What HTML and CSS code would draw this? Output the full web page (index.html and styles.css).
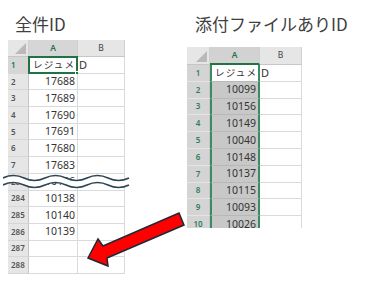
FILE: index.html
```html
<!DOCTYPE html>
<html>
<head>
<meta charset="utf-8">
<link rel="stylesheet" href="styles.css">
</head>
<body>
<div class="page">
  <section class="panel panel-left">
    <h2 class="title">全件ID</h2>
    <div class="sheet-wrap">
      <div class="sheet sheet-left">
        <div class="hd corner"><span class="tri"></span></div>
        <div class="hd col col-sel">A</div>
        <div class="hd col">B</div>

        <div class="rh rh-sel">1</div><div class="c txt active">レジュメ<span class="handle"></span></div><div class="c spill">D</div>
        <div class="rh">2</div><div class="c num">17688</div><div class="c"></div>
        <div class="rh">3</div><div class="c num">17689</div><div class="c"></div>
        <div class="rh">4</div><div class="c num">17690</div><div class="c"></div>
        <div class="rh">5</div><div class="c num">17691</div><div class="c"></div>
        <div class="rh">6</div><div class="c num">17680</div><div class="c"></div>
        <div class="rh">7</div><div class="c num">17683</div><div class="c"></div>
        <div class="rh">283</div><div class="c num">10136</div><div class="c"></div>
        <div class="rh">284</div><div class="c num">10138</div><div class="c"></div>
        <div class="rh">285</div><div class="c num">10140</div><div class="c"></div>
        <div class="rh">286</div><div class="c num">10139</div><div class="c"></div>
        <div class="rh">287</div><div class="c"></div><div class="c"></div>
        <div class="rh">288</div><div class="c"></div><div class="c"></div>
      </div>
      <svg class="wave" width="128" height="16" viewBox="0 0 128 16">
        <path d="M0 4 Q10.5 -1 21 4 T42 4 T63 4 T84 4 T105 4 T126 4 L128 4 L128 11 L126 11 Q115.5 16 105 11 T84 11 T63 11 T42 11 T21 11 T0 11 Z" fill="#fff"/>
        <path d="M0 4 Q10.5 -1 21 4 T42 4 T63 4 T84 4 T105 4 T126 4" fill="none" stroke="#2d4658" stroke-width="1.6"/>
        <path d="M0 11 Q10.5 6 21 11 T42 11 T63 11 T84 11 T105 11 T126 11" fill="none" stroke="#2d4658" stroke-width="1.6"/>
      </svg>
    </div>
  </section>

  <section class="panel panel-right">
    <h2 class="title">添付ファイルありID</h2>
    <div class="sheet sheet-right">
      <div class="hd corner"><span class="tri"></span></div>
      <div class="hd col col-sel col-sel-full">A</div>
      <div class="hd col">B</div>

      <div class="rh rh-hl">1</div><div class="c txt selcol first">レジュメ</div><div class="c spill">D</div>
      <div class="rh rh-hl">2</div><div class="c num selcol">10099</div><div class="c"></div>
      <div class="rh rh-hl">3</div><div class="c num selcol">10156</div><div class="c"></div>
      <div class="rh rh-hl">4</div><div class="c num selcol">10149</div><div class="c"></div>
      <div class="rh rh-hl">5</div><div class="c num selcol">10040</div><div class="c"></div>
      <div class="rh rh-hl">6</div><div class="c num selcol">10148</div><div class="c"></div>
      <div class="rh rh-hl">7</div><div class="c num selcol">10137</div><div class="c"></div>
      <div class="rh rh-hl">8</div><div class="c num selcol">10115</div><div class="c"></div>
      <div class="rh rh-hl">9</div><div class="c num selcol">10093</div><div class="c"></div>
      <div class="rh rh-hl">10</div><div class="c num selcol">10026</div><div class="c"></div>
    </div>
  </section>

  <svg class="arrow" width="385" height="285" viewBox="0 0 385 285">
    <polygon points="88,258 98,239 103,246 179,213 184,225 107,258 108,266" fill="#ff0000" stroke="#1c2a38" stroke-width="1.5" stroke-linejoin="miter"/>
  </svg>
</div>
</body>
</html>
```

FILE: styles.css
```css
* { box-sizing: border-box; margin: 0; padding: 0; }

html, body {
  width: 385px;
  height: 285px;
  background: #ffffff;
  overflow: hidden;
}

body {
  font-family: "Noto Sans", "Noto Sans CJK JP", sans-serif;
  color: #333;
}

.page {
  position: relative;
  width: 385px;
  height: 285px;
  display: flex;
  padding-left: 8px;
}

.panel-left {
  width: 179px;
}

.title {
  font-family: "Noto Sans CJK JP", sans-serif;
  font-weight: 400;
  font-size: 17px;
  line-height: 20px;
  color: #404040;
  white-space: nowrap;
}

.panel-left .title {
  margin-left: 7px;
  margin-top: 14px;
  margin-bottom: 6px;
}

.panel-right .title {
  margin-left: 8px;
  margin-top: 14px;
  margin-bottom: 13px;
}

.sheet-wrap {
  position: relative;
  width: 117px;
}

.sheet {
  display: grid;
  font-size: 10px;
  line-height: 1;
}

.sheet-left {
  grid-template-columns: 21px 49px 47px;
  grid-template-rows: 17px;
  grid-auto-rows: 16.7px;
}

.sheet-right {
  grid-template-columns: 23px 50px 42px;
  grid-template-rows: 18px;
  grid-auto-rows: 16.8px;
  height: 181px;
  overflow: hidden;
}

.hd {
  background: #e6e6e6;
  border-right: 1px solid #d0d0d0;
  border-bottom: 1px solid #c6c6c6;
  display: flex;
  align-items: center;
  justify-content: center;
  font-size: 8.5px;
  color: #444;
}

.corner {
  position: relative;
}

.tri {
  position: absolute;
  right: 2px;
  bottom: 2px;
  width: 0;
  height: 0;
  border-left: 11px solid transparent;
  border-bottom: 11px solid #b9b9b9;
}

.col-sel {
  background: #d6d6d6;
  color: #217346;
  font-weight: 600;
}

.col-sel-full {
  background: #d2d2d2;
  border-bottom: 2px solid #217346;
}

.rh {
  background: #e6e6e6;
  border-right: 1px solid #c6c6c6;
  border-bottom: 1px solid #d6d6d6;
  display: flex;
  align-items: center;
  padding-left: 3px;
  font-size: 8px;
  font-weight: 600;
  color: #555;
}

.sheet-right .rh {
  justify-content: center;
  padding-left: 0;
}

.rh-sel {
  background: #d6d6d6;
  color: #217346;
}

.rh-hl {
  background: #d4d4d4;
  color: #2f7d57;
  border-bottom-color: #e4e4e4;
}

.c {
  background: #fff;
  border-right: 1px solid #dadada;
  border-bottom: 1px solid #dadada;
  display: flex;
  align-items: center;
  position: relative;
  white-space: nowrap;
  overflow: visible;
}

.num {
  justify-content: flex-end;
  padding-right: 2px;
  font-size: 10.5px;
  color: #333;
}

.txt {
  font-family: "Noto Sans CJK JP", sans-serif;
  font-size: 9.5px;
  letter-spacing: 1.2px;
  padding-left: 3px;
  color: #333;
}

.spill {
  font-size: 11px;
  padding-left: 1px;
  color: #333;
}

.active {
  border: 2px solid #217346;
  margin: -1px 0 0 -1px;
}

.handle {
  position: absolute;
  right: -3px;
  bottom: -3px;
  width: 4px;
  height: 4px;
  background: #217346;
  border: 1px solid #fff;
}

.selcol {
  background: #c8c8c8;
  border-left: 2px solid #3a8a62;
  border-right: 2px solid #3a8a62;
  border-bottom-color: #b8b8b8;
}

.selcol.first {
  background: #fff;
}

.wave {
  position: absolute;
  left: -5px;
  top: 134px;
}

.arrow {
  position: absolute;
  left: 0;
  top: 0;
  pointer-events: none;
}
```
